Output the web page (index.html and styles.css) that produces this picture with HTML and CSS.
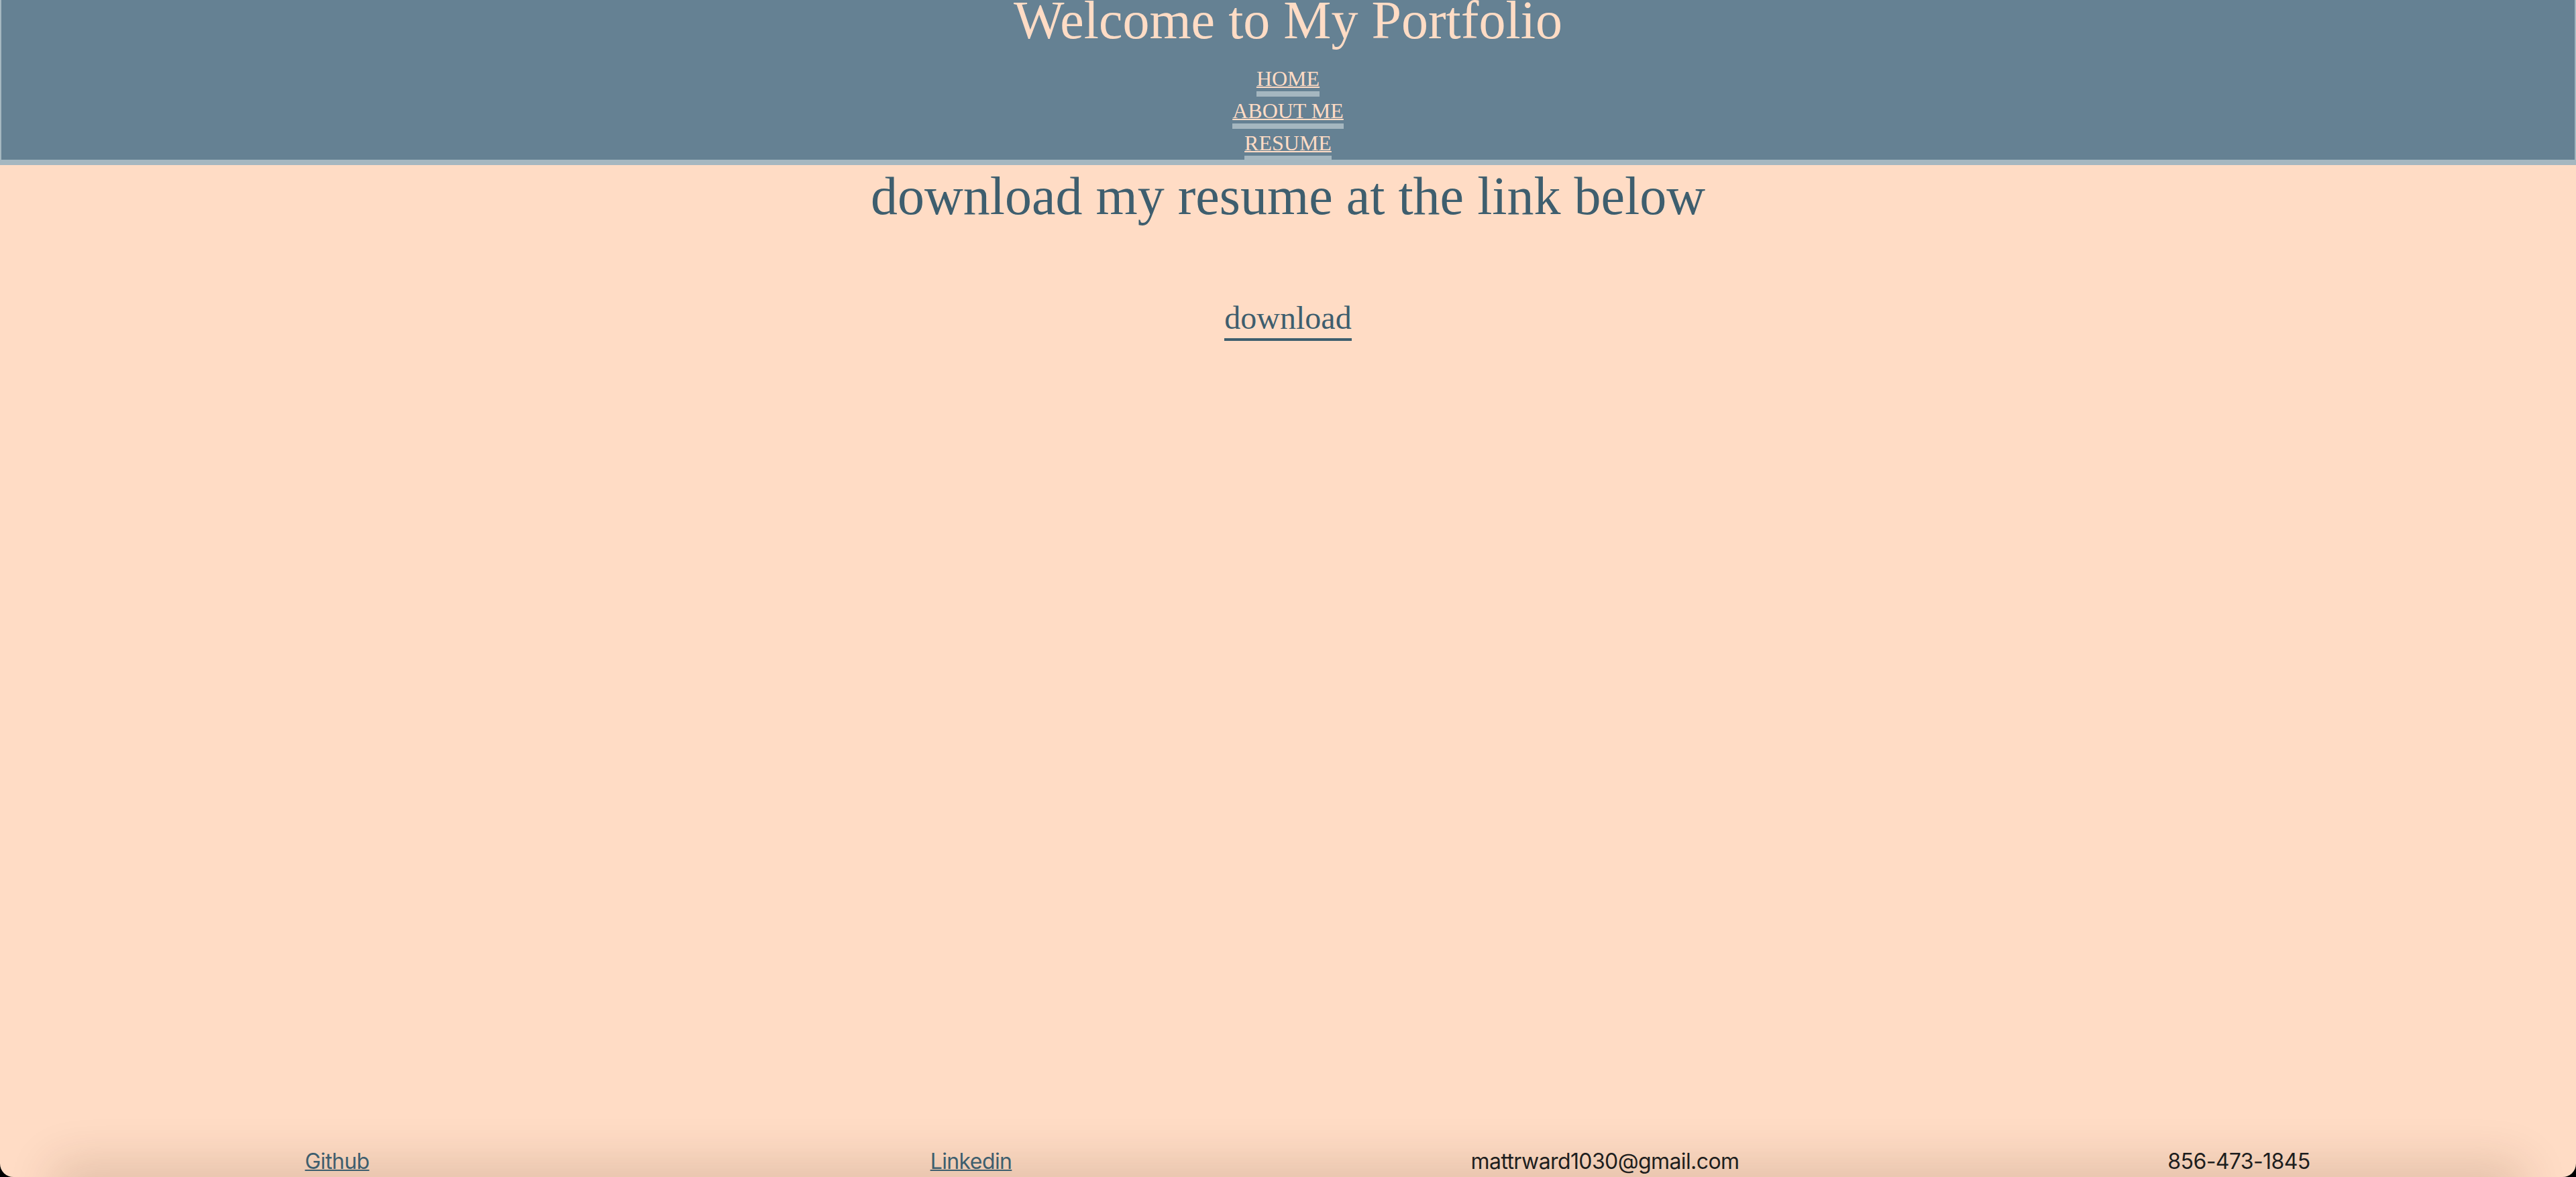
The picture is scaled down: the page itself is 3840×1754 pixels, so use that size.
FILE: index.html
```html
<!DOCTYPE html>
<html lang="en">
<head>
<meta charset="utf-8">
<title>Resume</title>
<link rel="stylesheet" href="styles.css">
</head>
<body>
<div class="page">
  <header class="site-header">
    <h1 class="site-title">Welcome to My Portfolio</h1>
    <ul class="nav">
      <li><a class="nav-link" href="#">HOME</a></li>
      <li><a class="nav-link" href="#">ABOUT ME</a></li>
      <li><a class="nav-link" href="#">RESUME</a></li>
    </ul>
  </header>
  <main class="content">
    <h2 class="resume-heading">download my resume at the link below</h2>
    <div class="download-row"><a class="download-link" href="#">download</a></div>
  </main>
  <footer class="site-footer">
    <div class="footer-item"><a class="footer-link" href="#">Github</a></div>
    <div class="footer-item"><a class="footer-link" href="#">Linkedin</a></div>
    <div class="footer-item footer-text">mattrward1030@gmail.com</div>
    <div class="footer-item footer-text">856-473-1845</div>
  </footer>
</div>
</body>
</html>
```

FILE: styles.css
```css
html {
  background: #000;
}

body {
  margin: 0;
}

.page {
  min-height: 100vh;
  display: flex;
  flex-direction: column;
  background: #ffdcc5;
  border-radius: 0 0 20px 20px;
  overflow: hidden;
  font-family: "Liberation Serif", "Times New Roman", serif;
}

.site-header {
  background: #658193;
  border-left: 2px solid #a5b7c0;
  border-right: 2px solid #a5b7c0;
  border-bottom: 8px solid #a5b7c0;
  text-align: center;
  display: flex;
  flex-direction: column;
  align-items: center;
}

.site-title {
  margin: 0;
  font-size: 80px;
  line-height: 60px;
  font-weight: normal;
  color: #ffdcc5;
}

.nav {
  list-style: none;
  margin: 39px 0 -2px;
  padding: 0;
  display: flex;
  flex-direction: column;
  align-items: center;
  gap: 3px;
}

.nav-link {
  display: block;
  font-size: 32px;
  line-height: 37px;
  color: #ffdcc5;
  text-decoration: underline;
  text-decoration-thickness: 2px;
  border-bottom: 8px solid #a5b7c0;
}

.content {
  text-align: center;
  color: #3e5e6e;
}

.resume-heading {
  margin: 1px 0 0;
  font-size: 80px;
  font-weight: normal;
  line-height: normal;
}

.download-row {
  display: flex;
  justify-content: center;
  margin-top: 108px;
}

.download-link {
  display: block;
  font-size: 48px;
  line-height: normal;
  color: #3e5e6e;
  text-decoration: none;
  padding-bottom: 3px;
  border-bottom: 4px solid #3e5e6e;
}

.site-footer {
  margin-top: auto;
  position: relative;
  display: grid;
  grid-template-columns: repeat(4, 1fr);
  padding: 0 30px 4px;
  font-family: Inter, "Noto Sans", sans-serif;
  font-size: 32px;
  letter-spacing: -0.6px;
  line-height: normal;
}

.site-footer::before {
  content: "";
  position: absolute;
  left: 100px;
  right: 100px;
  top: 100%;
  height: 40px;
  box-shadow: 0 0 70px 20px rgba(70, 35, 10, 0.16);
}

.footer-item {
  position: relative;
  text-align: center;
}

.footer-link {
  color: #3e5e6e;
  text-decoration: underline;
  text-decoration-thickness: 2px;
}

.footer-text {
  color: #1e1e1e;
}
```
